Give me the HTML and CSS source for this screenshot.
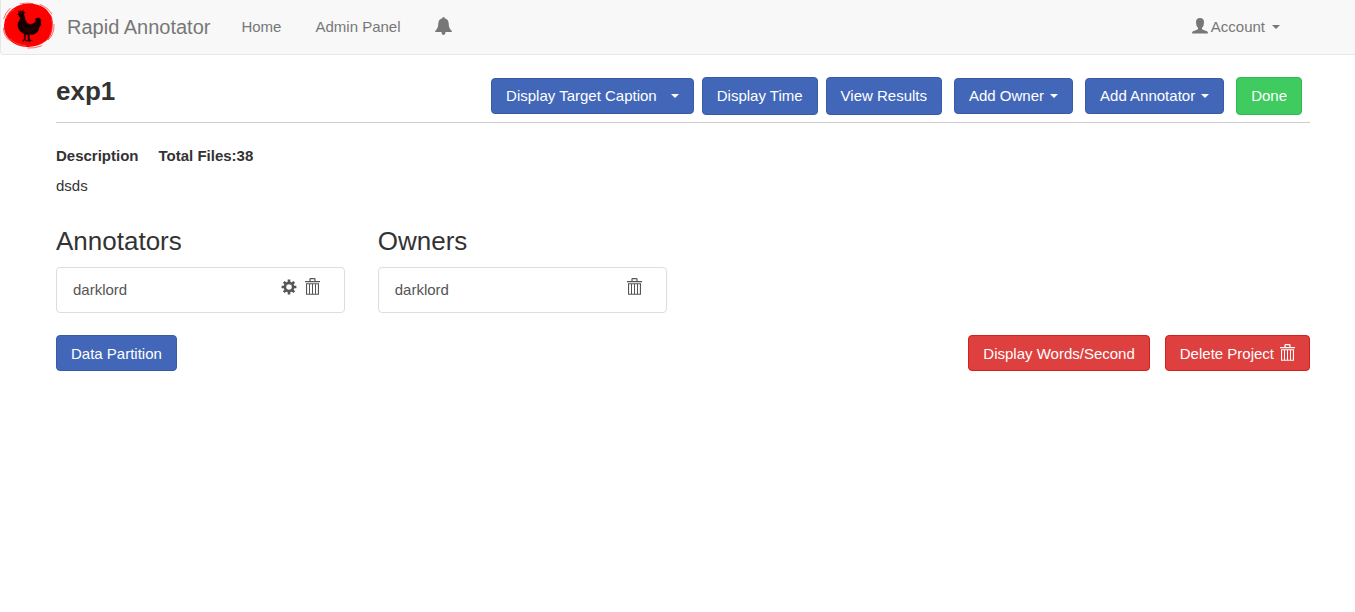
FILE: index.html
```html
<!DOCTYPE html>
<html lang="en">
<head>
<meta charset="utf-8">
<meta name="viewport" content="width=device-width, initial-scale=1">
<title>Rapid Annotator</title>
<link rel="stylesheet" href="styles.css">
</head>
<body>
<svg class="sprite" aria-hidden="true">
  <symbol id="trash" viewBox="0 0 15 17">
    <path d="M5 3V1.300Q5 .6 5.700 .6h3.600q.7 0 .7.7V3" fill="none" stroke="currentColor" stroke-width="1.200"/>
    <path d="M0 3h15v1.200H0zM1 5.200h13v11.500H1zM2.100 6.200v9.500h1.900V6.200zM5 6.200v9.500h2V6.200zM8 6.200v9.500h2V6.200zM11 6.200v9.500h1.900V6.200z" fill="currentColor" fill-rule="evenodd"/>
  </symbol>
</svg>
<nav class="navbar">
  <a class="logo" href="#" aria-label="Rapid Annotator home">
    <svg class="logo-art" viewBox="0 0 180 162" aria-hidden="true">
      <path d="M70 12Q92 8 112 14Q136 20 147 38Q161 53 158 80Q157 110 137 124Q112 142 82 141Q50 140 31 122Q11 103 12 76Q14 45 36 28Q50 16 70 12Z" fill="#fe0000"/>
      <path d="M31 24Q15 39 11 57M10 83Q12 108 27 121M119 13Q145 23 156 43M162 72Q163 104 144 120M126 137Q104 146 82 144M60 12Q77 7 100 11" fill="none" stroke="#fe2020" stroke-width="2"/>
      <path d="M17 57Q24 36 42 29M155 56Q162 87 148 108M30 116Q49 135 78 137M118 136Q140 125 150 109" fill="none" stroke="#ffb5b5" stroke-width="1"/>
      <path d="M53 44L57 39L54 34L60 36L61 31L65 35L70 30L70 36L75 37L71 42Q75 51 76 60Q79 72 91 73Q103 72 108 63L105 58Q111 51 119 54Q125 60 122 69Q125 76 118 81Q116 96 105 101Q97 106 88 103L89 119L97 122L89 123L88 127L85 122L78 124L85 118L83 104L77 102L76 118L80 123L74 121L68 125L69 120L73 118L72 101Q60 97 55 84Q50 72 59 60L62 51L57 50L58 46Z" fill="#130000" stroke="#130000" stroke-width="1"/>
      <path d="M67 75Q72 88 88 87Q101 88 110 75M69 84Q83 97 103 87M75 94Q87 99 96 94M112 60L108 69" fill="none" stroke="#750000" stroke-width="1"/>
      <circle cx="65" cy="41" r="1" fill="#fe0000"/>
    </svg>
  </a>
  <a class="brand" href="#">Rapid Annotator</a>
  <a class="nav-link" href="#">Home</a>
  <a class="nav-link" href="#">Admin Panel</a>
  <a class="nav-link" href="#" aria-label="Notifications">
    <svg class="bell" viewBox="0 0 17 18" aria-hidden="true"><path d="M8.500 0Q9.600 0 9.700 1.300Q13.500 2.200 13.700 6.500Q13.700 11 16.800 14v1H.2v-1Q3.300 11 3.300 6.500Q3.500 2.200 7.300 1.300Q7.400 0 8.500 0ZM6.500 15h4Q10.300 18 8.500 18T6.500 15Z" fill="currentColor"/></svg>
  </a>
  <button class="account" type="button">
    <svg class="user" viewBox="0 0 16 16" aria-hidden="true"><path d="M8 0Q12.200.2 12 4.500Q12 8 10 9.800v1.500Q12 12.200 15 13.300Q16 13.900 16 15.500H0Q0 13.900 1 13.300Q4 12.200 6 11.300V9.800Q4 8 4 4.500Q3.800.2 8 0Z" fill="currentColor"/></svg>
    Account <span class="caret caret-spaced"></span>
  </button>
</nav>

<main class="page">
  <header class="project-header">
    <h1>exp1</h1>
    <div class="actions">
      <button class="btn" type="button">Display Target Caption <span class="caret caret-wide"></span></button>
      <button class="btn btn-tall" type="button">Display Time</button>
      <button class="btn btn-tall" type="button">View Results</button>
      <div class="menus">
        <button class="btn" type="button">Add Owner <span class="caret"></span></button>
        <button class="btn" type="button">Add Annotator <span class="caret"></span></button>
        <button class="btn btn-tall btn-done" type="button">Done</button>
      </div>
    </div>
  </header>

  <section class="summary">
    <div class="facts"><strong>Description</strong><strong>Total Files:38</strong></div>
    <p>dsds</p>
  </section>

  <div class="people">
    <section>
      <h2>Annotators</h2>
      <div class="card">
        <span>darklord</span>
        <div class="tools">
          <button class="icon-btn" type="button" aria-label="Settings">
            <svg class="gear" viewBox="-8 -8 16 16" aria-hidden="true">
              <circle r="4.100" fill="none" stroke="currentColor" stroke-width="2.600"/>
              <path d="M0-7.400V-4.800M0 4.800V7.400M-7.400 0H-4.800M4.800 0H7.400M-5.200-5.200L-3.500-3.500M3.500 3.500L5.200 5.200M-5.200 5.200L-3.500 3.500M3.500-3.500L5.200-5.200" fill="none" stroke="currentColor" stroke-width="2.600"/>
            </svg>
          </button>
          <button class="icon-btn" type="button" aria-label="Remove annotator"><svg class="trash" aria-hidden="true"><use href="#trash"/></svg></button>
        </div>
      </div>
    </section>
    <section>
      <h2>Owners</h2>
      <div class="card">
        <span>darklord</span>
        <div class="tools">
          <button class="icon-btn" type="button" aria-label="Remove owner"><svg class="trash" aria-hidden="true"><use href="#trash"/></svg></button>
        </div>
      </div>
    </section>
  </div>

  <footer class="project-footer">
    <button class="btn" type="button">Data Partition</button>
    <div class="danger-actions">
      <button class="btn btn-danger" type="button">Display Words/Second</button>
      <button class="btn btn-danger" type="button">Delete Project <svg class="trash trash-inline" aria-hidden="true"><use href="#trash"/></svg></button>
    </div>
  </footer>
</main>
</body>
</html>
```

FILE: styles.css
```css
* { box-sizing: border-box; }
body {
  margin: 0;
  background: #fff;
  color: #333;
  font: 15px/22px "Liberation Sans", Arial, sans-serif;
}
button { font: inherit; cursor: pointer; }
h1, h2, p { margin: 0; }
.sprite { display: none; }

.navbar {
  display: flex;
  align-items: center;
  padding-right: 75px;
  background: #f8f8f8;
  border: 1px solid #e7e7e7;
  border-width: 0 0 1px 1px;
  border-radius: 0 0 0 4px;
  color: #777;
}
.navbar a { color: #777; text-decoration: none; }
.logo-art { display: block; width: 60px; height: 54px; margin-left: -1px; }
.brand { padding: 0 14px 0 7px; font-size: 20px; }
.nav-link { padding: 0 17px; }
.bell { display: block; width: 17px; height: 18px; margin-bottom: 2px; }
.account {
  display: flex;
  align-items: center;
  gap: 3px;
  margin-left: auto;
  padding: 0;
  border: 0;
  background: none;
  color: #777;
}
.user { width: 16px; height: 16px; margin-bottom: 2px; }
.caret {
  flex: none;
  border: 4px solid transparent;
  border-top-color: currentColor;
  border-bottom: 0;
}
.caret-spaced { margin-left: 4px; }
.caret-wide { margin-left: 8px; }

.page { padding: 0 45px 0 56px; }
.project-header {
  display: flex;
  align-items: center;
  justify-content: space-between;
  padding: 22px 8px 7px 0;
  border-bottom: 1px solid #ccc;
}
h1 { font-size: 26px; line-height: 28px; padding-bottom: 10px; }
h2 { font-size: 26px; line-height: 28px; font-weight: 400; }
.actions { display: flex; align-items: center; gap: 8px; }
.menus { display: flex; align-items: center; gap: 12px; margin-left: 4px; }
.btn {
  display: flex;
  align-items: center;
  gap: 6px;
  min-height: 36px;
  padding: 6px 14px;
  border: 1px solid #395ba6;
  border-radius: 4px;
  background: #4267b9;
  color: #fff;
  white-space: nowrap;
}
.btn-tall { min-height: 38px; }
.btn-done { background: #40cb60; border-color: #32b950; }
.btn-danger { background: #dd403e; border-color: #d3201e; }

.summary { padding-top: 22px; }
.facts { display: flex; gap: 20px; }
.summary p { padding-top: 8px; }

.people {
  display: grid;
  grid-template-columns: repeat(4, 1fr);
  gap: 33px;
  padding-top: 30px;
}
.card {
  display: flex;
  align-items: center;
  justify-content: space-between;
  min-height: 46px;
  margin-top: 12px;
  padding: 0 24px 0 16px;
  border: 1px solid #ddd;
  border-radius: 4px;
  color: #555;
}
.tools { display: flex; align-items: center; gap: 8px; padding-bottom: 7px; }
.icon-btn { padding: 0; border: 0; background: none; color: #555; }
.icon-btn svg { display: block; }
.gear { width: 16px; height: 16px; }
.trash { width: 15px; height: 17px; }

.project-footer { display: flex; justify-content: space-between; padding-top: 22px; }
.project-footer .btn { padding: 7px 14px 5px; }
.danger-actions { display: flex; gap: 15px; }
.trash-inline { margin-bottom: 4px; }
```
